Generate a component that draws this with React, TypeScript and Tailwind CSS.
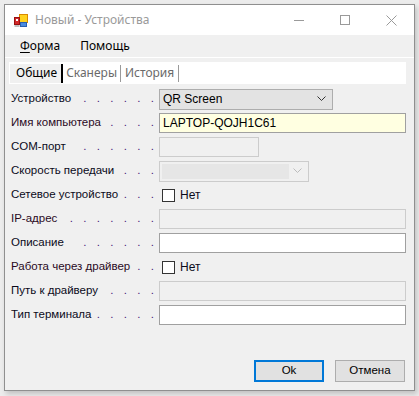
import React from "react";

const sans = { fontFamily: '"Liberation Sans", Arial, sans-serif' };

function Dots({ n }: { n: number }) {
  return (
    <div className="flex-1 flex justify-end text-[#4a1a7a]">
      {Array.from({ length: n }).map((_, i) => (
        <span key={i} className="w-[13.5px] shrink-0 text-center leading-none">.</span>
      ))}
    </div>
  );
}

function Row({ label, n, maroon, children }: { label: string; n: number; maroon?: boolean; children: React.ReactNode }) {
  return (
    <div className="h-[24px] flex items-center">
      <div className="w-[150px] shrink-0 flex items-center pl-[2px]">
        <span className={"whitespace-nowrap " + (maroon ? "text-[#2a0a1e]" : "text-[#0a0a1a]")}>{label}</span>
        <Dots n={n} />
      </div>
      {children}
    </div>
  );
}

function Chevron({ color }: { color: string }) {
  return (
    <svg width="9" height="6" viewBox="0 0 9 6">
      <path d="M0.5 0.5 L4.5 4.5 L8.5 0.5" fill="none" stroke={color} strokeWidth="1" />
    </svg>
  );
}

function Check() {
  return (
    <div className="flex items-center ml-[3px]">
      <div className="w-[13px] h-[13px] bg-white border border-[#333333]" />
      <span className="ml-[5px] text-[12px] text-[#0a0a1a]">Нет</span>
    </div>
  );
}

function AppIcon() {
  return (
    <svg width="14" height="14" viewBox="0 0 14 14">
      <rect x="5.5" y="0.5" width="8" height="8" fill="#ffd21e" stroke="#d98a00" />
      <rect x="6.5" y="8.5" width="6" height="4" fill="#4a8be0" stroke="#2a5fb0" />
      <rect x="0.5" y="3.5" width="5" height="7" fill="#d22a2a" stroke="#9a1010" />
      <rect x="2" y="5" width="2" height="2" fill="#ffffff" />
      <rect x="0.5" y="11" width="5" height="2" fill="#c0c0c0" />
    </svg>
  );
}

export default function App() {
  return (
    <div className="w-[419px] h-[396px] bg-[#ececec] pt-[4px] pl-[4px]" style={sans}>
      <div className="w-[411px] h-[387px] border border-[#8f8f8f] bg-[#f0f0f0] flex flex-col shadow-[2px_3px_5px_rgba(0,0,0,0.18)]">
        {/* Title bar */}
        <div className="h-[30px] bg-white flex items-center shrink-0">
          <div className="ml-[9px] mt-[1px]"><AppIcon /></div>
          <span className="ml-[7px] text-[12px] text-[#9a9a9a]" style={{ fontFamily: '"Noto Sans", "Open Sans", sans-serif' }}>Новый - Устройства</span>
          <div className="flex-1" />
          <div className="w-[46px] h-[30px] flex items-center justify-center">
            <div className="w-[10px] h-px bg-[#9a9a9a]" />
          </div>
          <div className="w-[46px] h-[30px] flex items-center justify-center">
            <div className="w-[10px] h-[10px] border border-[#9a9a9a]" />
          </div>
          <div className="w-[46px] h-[30px] flex items-center justify-center">
            <svg width="11" height="11" viewBox="0 0 11 11">
              <path d="M0.5 0.5 L10.5 10.5 M10.5 0.5 L0.5 10.5" stroke="#9a9a9a" strokeWidth="1" />
            </svg>
          </div>
        </div>
        {/* Menu bar */}
        <div className="h-[23px] flex items-center text-[12px] text-black shrink-0 border-b border-white" style={{ fontFamily: '"Noto Sans", "Open Sans", sans-serif' }}>
          <span className="ml-[15px]"><span className="underline underline-offset-2">Ф</span>орма</span>
          <span className="ml-[20px]">Помощь</span>
        </div>
        {/* Content */}
        <div className="flex-1 flex flex-col pl-[4px] pr-[8px] pt-[4px] text-[11.5px]">
          <div className="h-[22px] bg-white flex items-center pl-[1px] text-[12px] shrink-0" style={{ fontFamily: '"Noto Sans", "Open Sans", sans-serif' }}>
            <div className="h-[19px] bg-[#f0f0f0] flex items-center pl-[6px] pr-[4px] text-black">Общие</div>
            <div className="w-[2px] h-[19px] bg-black" />
            <span className="px-[3px] text-[#6a6a6a]">Сканеры</span>
            <div className="w-px h-[17px] bg-[#9a9a9a]" />
            <span className="px-[4px] text-[#6a6a6a]">История</span>
            <div className="w-px h-[17px] bg-[#9a9a9a]" />
          </div>
          <div className="h-[3px] shrink-0" />
          <Row label="Устройство" n={6}>
            <div className="w-[174px] h-[21px] bg-[#e3e3e3] border border-[#adadad] flex items-center pl-[3px] pr-[6px] text-black text-[12px]">
              <span className="flex-1">QR Screen</span>
              <Chevron color="#333333" />
            </div>
          </Row>
          <Row label="Имя компьютера" n={4} maroon>
            <div className="flex-1 h-[20px] bg-[#ffffe1] border border-[#a0a0a0] flex items-center pl-[3px] text-black text-[12px]">LAPTOP-QOJH1C61</div>
          </Row>
          <Row label="COM-порт" n={6}>
            <div className="w-[100px] h-[20px] bg-[#f0f0f0] border border-[#cccccc]" />
          </Row>
          <Row label="Скорость передачи" n={3}>
            <div className="w-[150px] h-[21px] bg-[#f0f0f0] border border-[#cccccc] flex items-center pl-[2px] pr-[6px]">
              <div className="w-[127px] h-[15px] bg-[#e6e6e6]" />
              <div className="flex-1" />
              <Chevron color="#bcbcbc" />
            </div>
          </Row>
          <Row label="Сетевое устройство" n={3}>
            <Check />
          </Row>
          <Row label="IP-адрес" n={7} maroon>
            <div className="flex-1 h-[20px] bg-[#f0f0f0] border border-[#cccccc]" />
          </Row>
          <Row label="Описание" n={6}>
            <div className="flex-1 h-[20px] bg-white border border-[#a0a0a0]" />
          </Row>
          <Row label="Работа через драйвер" n={2} maroon>
            <Check />
          </Row>
          <Row label="Путь к драйверу" n={4}>
            <div className="flex-1 h-[20px] bg-[#f0f0f0] border border-[#cccccc]" />
          </Row>
          <Row label="Тип терминала" n={5}>
            <div className="flex-1 h-[20px] bg-white border border-[#a0a0a0]" />
          </Row>
          <div className="flex-1" />
          <div className="flex justify-end gap-[11px] pr-[1px] pb-[8px] text-[11.5px]">
            <div className="w-[70px] h-[22px] bg-[#e1e1e1] border-2 border-[#0078d7] flex items-center justify-center text-black">Ok</div>
            <div className="w-[70px] h-[22px] bg-[#e1e1e1] border border-[#adadad] flex items-center justify-center text-black">Отмена</div>
          </div>
        </div>
      </div>
    </div>
  );
}
